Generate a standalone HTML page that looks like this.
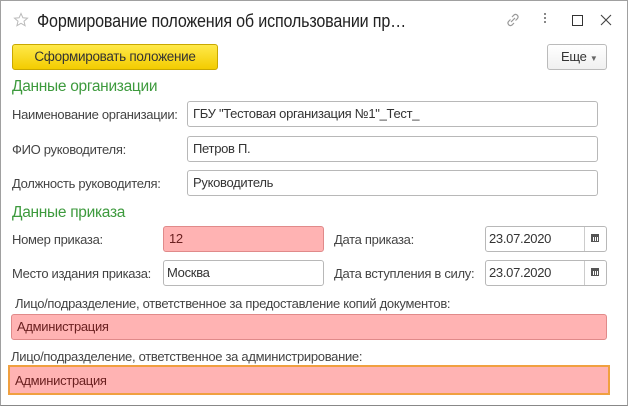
<!DOCTYPE html>
<html><head><meta charset="utf-8"><style>
body{margin:0;width:628px;height:406px;background:#fff;position:relative;overflow:hidden;font-family:"Liberation Sans",sans-serif;font-size:13px;color:#444;letter-spacing:-0.3px}
.a{position:absolute;white-space:nowrap}
.in{position:absolute;box-sizing:border-box;border:1px solid #b8b8b8;border-radius:3px;background:#fff;padding-left:5px;color:#333;line-height:23px}
.pk{background:#ffb3b3;border-color:#e08a8a;color:#6a2020}
.g{color:#3d9a3d;font-size:15.5px}
.cal{position:absolute;right:0;top:0;bottom:0;width:21px;border-left:1px solid #ccc}
.cal:after{content:"";position:absolute;left:6px;top:7px;width:8px;height:8px;border:1px solid #555;border-top-width:3px;box-sizing:border-box;background:repeating-linear-gradient(90deg,#555 0 1px,#fff 1px 2px)}
</style></head><body>
<div style="position:absolute;left:0;top:0;right:0;bottom:0;border:1px solid #a0a0a0;border-bottom-color:#888"></div>
<svg class="a" style="left:13px;top:12px" width="16" height="16" viewBox="0 0 16 16"><path d="M8 1.5l1.9 4.3 4.6.4-3.5 3 1.1 4.5L8 11.3 3.9 13.7 5 9.2 1.5 6.2l4.6-.4z" fill="none" stroke="#bbb" stroke-width="1"/></svg>
<div class="a" style="left:37px;top:10px;font-size:18.5px;color:#222;letter-spacing:-0.2px;transform:scaleX(0.87);transform-origin:0 0">Формирование положения об использовании пр…</div>
<svg class="a" style="left:505px;top:12px" width="16" height="16" viewBox="0 0 16 16"><g fill="none" stroke="#999" stroke-width="1.2"><path d="M7 5l2-2a2.5 2.5 0 0 1 3.5 3.5l-2 2"/><path d="M9 11l-2 2a2.5 2.5 0 0 1-3.5-3.5l2-2"/><path d="M6 10l4-4"/></g></svg>
<div class="a" style="left:544px;top:13px;width:2px;height:2px;background:#888;box-shadow:0 4px #888,0 8px #888"></div>
<div class="a" style="left:572px;top:15px;width:9px;height:9px;border:1px solid #333"></div>
<svg class="a" style="left:600px;top:14px" width="12" height="12" viewBox="0 0 12 12"><path d="M1 1l10 10M11 1L1 11" stroke="#444" stroke-width="1.1"/></svg>
<div class="a" style="left:12px;top:44px;width:206px;height:26px;box-sizing:border-box;border:1px solid #c9a800;border-radius:3px;background:linear-gradient(#ffe94a,#f3cc00);color:#333;text-align:center;line-height:24px;font-size:13.5px">Сформировать положение</div>
<div class="a" style="left:547px;top:44px;width:60px;height:26px;box-sizing:border-box;border:1px solid #bbb;border-radius:3px;background:linear-gradient(#fff,#f0f0f0);color:#333;line-height:24px;padding-left:13px">Еще <span style="font-size:8px;color:#666">▼</span></div>
<div class="a g" style="left:12px;top:78px">Данные организации</div>
<div class="a" style="left:12px;top:107px">Наименование организации:</div>
<div class="in" style="left:187px;top:101px;width:411px;height:26px">ГБУ "Тестовая организация №1"_Тест_</div>
<div class="a" style="left:12px;top:142px">ФИО руководителя:</div>
<div class="in" style="left:187px;top:136px;width:411px;height:26px">Петров П.</div>
<div class="a" style="left:12px;top:176px">Должность руководителя:</div>
<div class="in" style="left:187px;top:170px;width:411px;height:26px">Руководитель</div>
<div class="a g" style="left:12px;top:204px">Данные приказа</div>
<div class="a" style="left:12px;top:232px">Номер приказа:</div>
<div class="in pk" style="left:163px;top:226px;width:161px;height:26px">12</div>
<div class="a" style="left:334px;top:232px">Дата приказа:</div>
<div class="in" style="left:485px;top:226px;width:122px;height:26px;padding-left:3px">23.07.2020<div class="cal"></div></div>
<div class="a" style="left:12px;top:266px">Место издания приказа:</div>
<div class="in" style="left:163px;top:260px;width:161px;height:26px;padding-left:3px">Москва</div>
<div class="a" style="left:334px;top:266px">Дата вступления в силу:</div>
<div class="in" style="left:485px;top:260px;width:122px;height:26px;padding-left:3px">23.07.2020<div class="cal"></div></div>
<div class="a" style="left:15px;top:296px">Лицо/подразделение, ответственное за предоставление копий документов:</div>
<div class="in pk" style="left:11px;top:314px;width:596px;height:26px">Администрация</div>
<div class="a" style="left:11px;top:349px">Лицо/подразделение, ответственное за администрирование:</div>
<div class="in pk" style="left:8px;top:365px;width:602px;height:30px;border:2px solid #f0a040;border-radius:0;line-height:27px">Администрация</div>
</body></html>
